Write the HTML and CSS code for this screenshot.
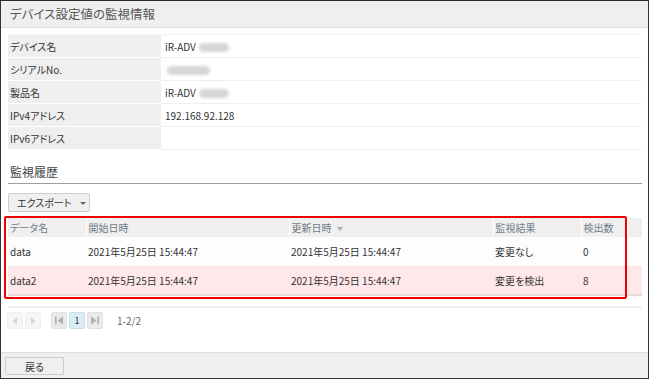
FILE: index.html
```html
<!DOCTYPE html>
<html lang="ja">
<head>
<meta charset="utf-8">
<title>デバイス設定値の監視情報</title>
<link rel="stylesheet" href="styles.css">
</head>
<body>
<div class="window">
  <div class="titlebar">デバイス設定値の監視情報</div>
  <div class="content">
    <table class="info">
      <tr><th>デバイス名</th><td>iR-ADV <span class="blur w30"></span></td></tr>
      <tr><th>シリアルNo.</th><td><span class="blur w44 first"></span></td></tr>
      <tr><th>製品名</th><td>iR-ADV <span class="blur w30"></span></td></tr>
      <tr><th>IPv4アドレス</th><td>192.168.92.128</td></tr>
      <tr><th>IPv6アドレス</th><td></td></tr>
    </table>

    <div class="section-title">監視履歴</div>

    <button class="export">エクスポート<span class="caret"></span></button>

    <div class="grid-wrap">
      <table class="grid">
        <colgroup>
          <col class="c1"><col class="c2"><col class="c3"><col class="c4"><col class="c5"><col class="c6">
        </colgroup>
        <thead>
          <tr><th>データ名</th><th>開始日時</th><th>更新日時<span class="sort"></span></th><th>監視結果</th><th>検出数</th><th class="gutter"></th></tr>
        </thead>
        <tbody>
          <tr class="normal"><td>data</td><td>2021年5月25日 15:44:47</td><td>2021年5月25日 15:44:47</td><td>変更なし</td><td>0</td><td></td></tr>
          <tr class="alert"><td>data2</td><td>2021年5月25日 15:44:47</td><td>2021年5月25日 15:44:47</td><td>変更を検出</td><td>8</td><td></td></tr>
        </tbody>
      </table>
      <div class="highlight"></div>
    </div>

    <div class="pager">
      <span class="pbtn disabled"><svg width="8" height="8" viewBox="0 0 8 8"><path d="M6 0.5 L1.5 4 L6 7.5 Z" fill="#d4d4d4"/></svg></span>
      <span class="pbtn disabled"><svg width="8" height="8" viewBox="0 0 8 8"><path d="M2 0.5 L6.5 4 L2 7.5 Z" fill="#d4d4d4"/></svg></span>
      <span class="pgroup">
        <span class="pbtn nav"><svg width="10" height="9" viewBox="0 0 10 9"><rect x="1" y="0.5" width="1.6" height="8" fill="#b0b0b0"/><path d="M9 0.5 L3.5 4.5 L9 8.5 Z" fill="#b0b0b0"/></svg></span>
        <span class="pbtn current">1</span>
        <span class="pbtn nav"><svg width="10" height="9" viewBox="0 0 10 9"><path d="M1 0.5 L6.5 4.5 L1 8.5 Z" fill="#b0b0b0"/><rect x="7.4" y="0.5" width="1.6" height="8" fill="#b0b0b0"/></svg></span>
      </span>
      <span class="count">1-2/2</span>
    </div>
  </div>
  <div class="footer">
    <button class="back">戻る</button>
  </div>
</div>
</body>
</html>
```

FILE: styles.css
```css
* { box-sizing: border-box; }

html, body {
  margin: 0;
  padding: 0;
  background: #fff;
}

body {
  font-family: "Noto Sans CJK JP", "Noto Sans", sans-serif;
  font-feature-settings: "palt";
  color: #333;
  font-size: 10px;
}

.window {
  width: 649px;
  height: 379px;
  border: 1px solid #333;
  border-top-color: #2a2a2a;
  display: flex;
  flex-direction: column;
  overflow: hidden;
}

.titlebar {
  height: 27px;
  flex: none;
  background: #efefef;
  border-bottom: 1px solid #dedede;
  padding-left: 9px;
  font-size: 12.5px;
  line-height: 26px;
  color: #555;
}

.content {
  flex: 1;
  padding: 6px 6px 0 7px;
}

/* device info table */
.info {
  width: 633px;
  border-collapse: collapse;
  border-top: 1px solid #f4f4f4;
}

.info th,
.info td {
  height: 23px;
  padding: 0;
  font-weight: normal;
  text-align: left;
  vertical-align: middle;
}

.info th {
  width: 153px;
  background: #efefef;
  border-bottom: 1px solid #fff;
  padding-left: 2px;
  color: #333;
}

.info td {
  border-bottom: 1px solid #efefef;
  padding-left: 4px;
}

.blur {
  display: inline-block;
  height: 9px;
  background: #d6d6d6;
  border-radius: 5px;
  filter: blur(1.8px);
  vertical-align: middle;
  margin-left: 1px;
}

.blur.w30 { width: 30px; }
.blur.w44 { width: 43px; }
.blur.first { margin-left: 2px; }

/* section */
.section-title {
  margin-top: 0;
  padding: 13px 0 2px 2px;
  font-size: 12px;
  line-height: 18px;
  color: #444;
  border-bottom: 1px solid #9e9e9e;
}

.export {
  display: flex;
  align-items: center;
  margin-top: 9px;
  width: 82px;
  height: 19px;
  padding: 0 0 0 8px;
  border: 1px solid #cdcdcd;
  border-radius: 2px;
  background: #efefef;
  font-family: inherit;
  font-feature-settings: "palt";
  font-size: 10px;
  color: #333;
}

.caret {
  margin-left: 9px;
  width: 0;
  height: 0;
  border-left: 3px solid transparent;
  border-right: 3px solid transparent;
  border-top: 3px solid #666;
  margin-top: 2px;
}

/* data grid */
.grid-wrap {
  position: relative;
  margin-top: 6px;
}

.grid {
  width: 634px;
  border-collapse: collapse;
  table-layout: fixed;
}

.grid .c1 { width: 78px; }
.grid .c2 { width: 203px; }
.grid .c3 { width: 204px; }
.grid .c4 { width: 88px; }
.grid .c5 { width: 46px; }
.grid .c6 { width: 15px; }

.grid th {
  height: 19px;
  padding: 0 0 0 2px;
  background: #efefef;
  border-left: 1px solid #fff;
  font-weight: normal;
  text-align: left;
  color: #6f7c88;
  vertical-align: middle;
}

.grid th:first-child { border-left: none; }

.sort {
  display: inline-block;
  margin-left: 5px;
  width: 0;
  height: 0;
  border-left: 3px solid transparent;
  border-right: 3px solid transparent;
  border-top: 4px solid #a4abb2;
  vertical-align: middle;
}

.grid td {
  height: 29px;
  padding: 0 0 0 2px;
  vertical-align: middle;
  white-space: nowrap;
}

.grid tr.normal td { background: #fdfdfd; }
.grid tr.alert td {
  background: #ffe8ea;
  border-bottom: 2px solid #e5dadd;
}

.highlight {
  position: absolute;
  left: -4px;
  top: -2px;
  width: 623px;
  height: 83px;
  border: 2px solid #f20000;
  border-radius: 2px;
  pointer-events: none;
}

/* pager */
.pager {
  display: flex;
  align-items: center;
  margin-top: 10px;
  padding-top: 4px;
  border-top: 2px solid #f1f1f1;
  width: 634px;
}

.pbtn {
  display: inline-flex;
  align-items: center;
  justify-content: center;
  width: 16px;
  height: 17px;
  margin-right: 2px;
  border-radius: 2px;
  font-size: 9px;
  color: #333;
}

.pager > .pbtn:first-child { margin-left: -1px; }

.pbtn.disabled {
  background: #f5f5f5;
  border: 1px solid #f0f0f0;
}

.pgroup {
  display: inline-flex;
  margin-left: 8px;
}

.pbtn.nav {
  background: #eaeaea;
  border: 1px solid #e2e2e2;
}

.pbtn.current {
  background: #dbeef6;
  border: 1px solid #c4e0ec;
  line-height: 1;
}

.count {
  margin-left: 12px;
  color: #666;
  font-size: 10px;
}

/* footer */
.footer {
  flex: none;
  height: 26px;
  background: #efefef;
  border-top: 1px solid #dedede;
  padding: 4px 0 0 4px;
}

.back {
  display: block;
  width: 59px;
  height: 18px;
  padding: 0;
  border: 1px solid #cdcdcd;
  border-radius: 1px;
  background: #efefef;
  font-family: inherit;
  font-feature-settings: "palt";
  font-size: 10px;
  color: #333;
}
```
